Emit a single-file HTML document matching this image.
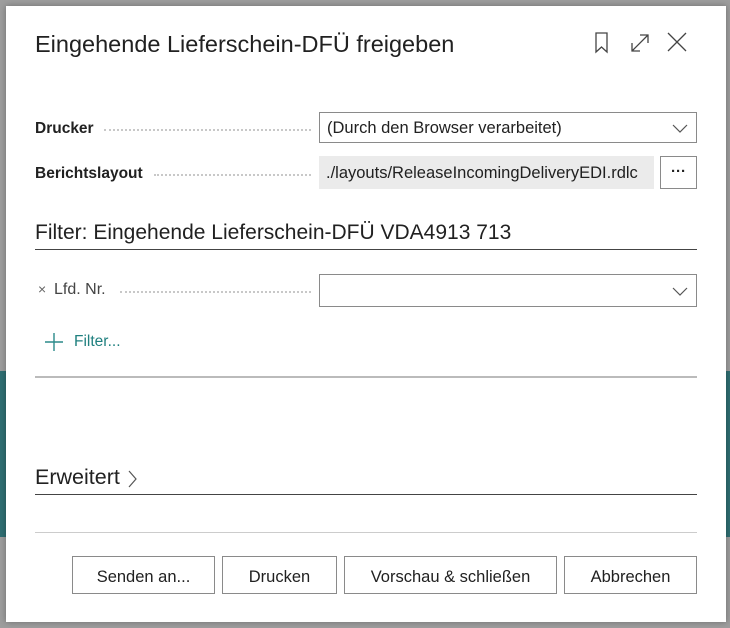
<!DOCTYPE html>
<html><head><meta charset="utf-8"><style>
html,body{margin:0;padding:0;width:730px;height:628px;overflow:hidden;background:#9d9d9d;font-family:"Liberation Sans",sans-serif;color:#212121}
.band{position:absolute;top:371px;height:166px;width:730px;background:#2f6e72}
.dlg{position:absolute;left:6px;top:6px;width:720px;height:616px;background:#fff;box-shadow:0 0 6px rgba(0,0,0,.3)}
.abs{position:absolute}
.title{left:29px;top:25px;font-size:23.5px;color:#212121}
.lbl{font-size:15.5px;font-weight:bold;color:#212121}
.dots{border-bottom:2px dotted #c8c8c8;height:0}
.box{border:1px solid #8a8a8a;background:#fff;height:31px;box-sizing:border-box;font-size:16.5px;line-height:30px;padding-left:7px}
.btn{position:absolute;top:550px;height:38px;border:1px solid #8a8a8a;box-sizing:border-box;background:#fff;font-size:16.5px;text-align:center;line-height:40px;color:#212121}
</style></head><body>
<div class="band"></div>
<div class="dlg">
<div class="abs title">Eingehende Lieferschein-DFÜ freigeben</div>
<svg class="abs" style="left:586px;top:25px" width="100" height="24" viewBox="0 0 100 24" fill="none" stroke="#444" stroke-width="1.3">
<path d="M4 2h11v19l-5.5-5-5.5 5z"/>
<path d="M40 20L56 4M48 4h8v8M40 12v8h8"/>
<path d="M76 2l18 18M94 2L76 20"/>
</svg>
<div class="abs lbl" style="left:29px;top:114px">Drucker</div>
<div class="abs dots" style="left:98px;top:123px;width:207px"></div>
<div class="abs box" style="left:313px;top:106px;width:378px">(Durch den Browser verarbeitet)</div>
<svg class="abs" style="left:666px;top:117px" width="16" height="10"><path d="M1 2l7 7 7-7" stroke="#555" fill="none" stroke-width="1.2"/></svg>
<div class="abs lbl" style="left:29px;top:159px">Berichtslayout</div>
<div class="abs dots" style="left:148px;top:168px;width:157px"></div>
<div class="abs" style="left:313px;top:150px;width:335px;height:33px;background:#ebebeb;font-size:16.5px;line-height:34px;padding-left:7px;box-sizing:border-box;white-space:nowrap;overflow:hidden">./layouts/ReleaseIncomingDeliveryEDI.rdlc</div>
<div class="abs box" style="left:654px;top:150px;width:37px;height:33px;padding:0;text-align:center;line-height:30px;font-weight:bold;font-size:15px">···</div>
<div class="abs" style="left:29px;top:215px;font-size:21px">Filter: Eingehende Lieferschein-DFÜ VDA4913 713</div>
<div class="abs" style="left:29px;top:243px;width:662px;height:1px;background:#444"></div>
<div class="abs" style="left:32px;top:275px;font-size:14px;color:#666">×</div>
<div class="abs" style="left:48px;top:275px;font-size:16px;color:#444">Lfd. Nr.</div>
<div class="abs dots" style="left:114px;top:285px;width:191px"></div>
<div class="abs box" style="left:313px;top:268px;width:378px;height:33px"></div>
<svg class="abs" style="left:666px;top:280px" width="16" height="10"><path d="M1 2l7 7 7-7" stroke="#555" fill="none" stroke-width="1.2"/></svg>
<svg class="abs" style="left:38px;top:326px" width="20" height="20"><path d="M10 1v18M1 10h18" stroke="#2b8a8a" stroke-width="1.4"/></svg>
<div class="abs" style="left:68px;top:327px;font-size:15.5px;color:#20807f">Filter...</div>
<div class="abs" style="left:29px;top:370px;width:662px;height:2px;background:#bbb"></div>
<div class="abs" style="left:29px;top:459px;font-size:21.5px">Erweitert</div>
<svg class="abs" style="left:121px;top:464px" width="10" height="18"><path d="M2 1l7 8-7 8" stroke="#555" fill="none" stroke-width="1.2"/></svg>
<div class="abs" style="left:29px;top:488px;width:662px;height:1px;background:#444"></div>
<div class="abs" style="left:29px;top:526px;width:662px;height:1px;background:#ccc"></div>
<div class="btn" style="left:66px;width:143px">Senden an...</div>
<div class="btn" style="left:216px;width:115px">Drucken</div>
<div class="btn" style="left:338px;width:213px">Vorschau &amp; schließen</div>
<div class="btn" style="left:558px;width:133px">Abbrechen</div>
</div>
</body></html>
